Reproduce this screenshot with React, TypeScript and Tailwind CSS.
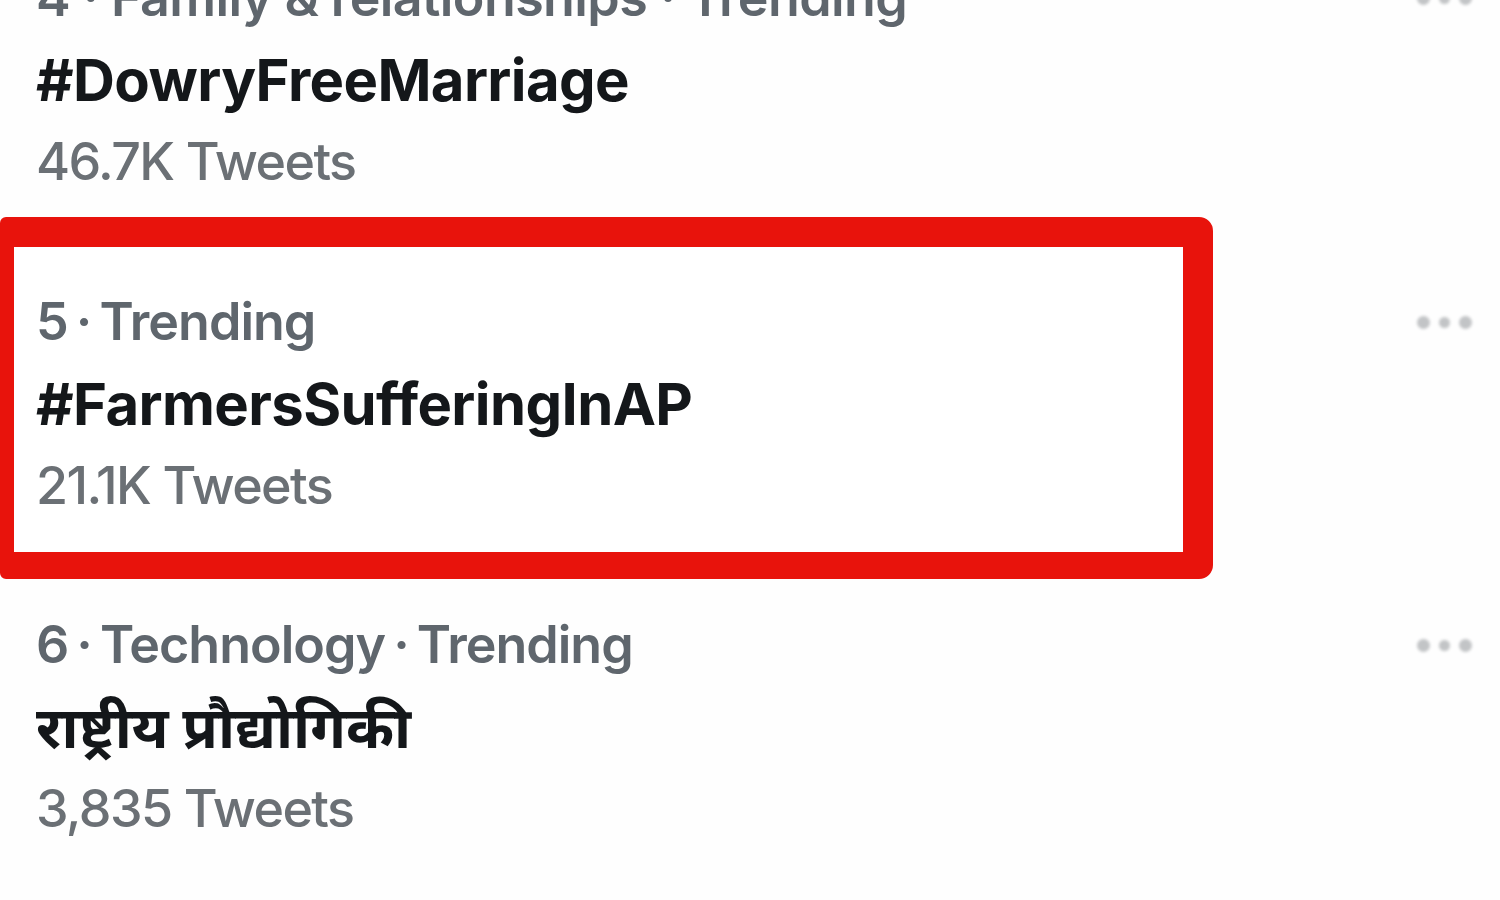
import React from "react";

const font = { fontFamily: "Inter, 'Noto Sans', 'Noto Sans Devanagari', sans-serif" };

function Dots() {
  return (
    <div className="flex items-center gap-[9px] h-[82px] blur-[1.5px]">
      <span className="w-[13px] h-[13px] rounded-full bg-[#c2c4c6]" />
      <span className="w-[11px] h-[11px] rounded-full bg-[#c2c4c6]" />
      <span className="w-[13px] h-[13px] rounded-full bg-[#c2c4c6]" />
    </div>
  );
}

function Trend({ meta, title, count, deva, wide }: { meta: string; title: string; count: string; deva?: boolean; wide?: boolean }) {
  return (
    <div className="flex flex-col">
      <div
        className={
          wide
            ? "h-[82px] leading-[82px] text-[52px] font-semibold text-[#5f666d] tracking-[-0.6px] whitespace-nowrap"
            : "h-[82px] leading-[82px] text-[52px] font-semibold text-[#5f666d] tracking-[-1px] [word-spacing:-4px] whitespace-nowrap"
        }
      >
        {meta}
      </div>
      <div
        className={
          deva
            ? "h-[82px] leading-[82px] text-[58px] font-bold text-[#14171a] whitespace-nowrap"
            : "h-[82px] leading-[82px] text-[58px] font-bold text-[#14171a] tracking-[-0.6px] whitespace-nowrap"
        }
      >
        {title}
      </div>
      <div className="h-[82px] leading-[82px] text-[52px] font-medium text-[#6b7075] tracking-[-1.6px] whitespace-nowrap">{count}</div>
    </div>
  );
}

export default function App() {
  return (
    <div className="w-[1500px] h-[900px] overflow-hidden bg-[#fefefe]" style={font}>
      <div className="mt-[-43px] flex flex-col">
        <div className="flex justify-between pl-[36px] pr-[28px]">
          <Trend meta="4 · Family & relationships · Trending" title="#DowryFreeMarriage" count="46.7K Tweets" wide />
          <Dots />
        </div>
        <div className="flex justify-between pr-[28px] mt-[14px]">
          <div className="w-[1213px] h-[362px] border-t-[30px] border-r-[30px] border-b-[27px] border-l-[14px] border-[#e8130c] rounded-r-[14px] rounded-l-[6px] bg-white pt-[34px] pl-[22px]">
            <Trend meta="5 · Trending" title="#FarmersSufferingInAP" count="21.1K Tweets" />
          </div>
          <div className="pt-[64px]">
            <Dots />
          </div>
        </div>
        <div className="flex justify-between pl-[36px] pr-[28px] mt-[25px]">
          <Trend meta="6 · Technology · Trending" title="राष्ट्रीय प्रौद्योगिकी" count="3,835 Tweets" deva />
          <Dots />
        </div>
      </div>
    </div>
  );
}
